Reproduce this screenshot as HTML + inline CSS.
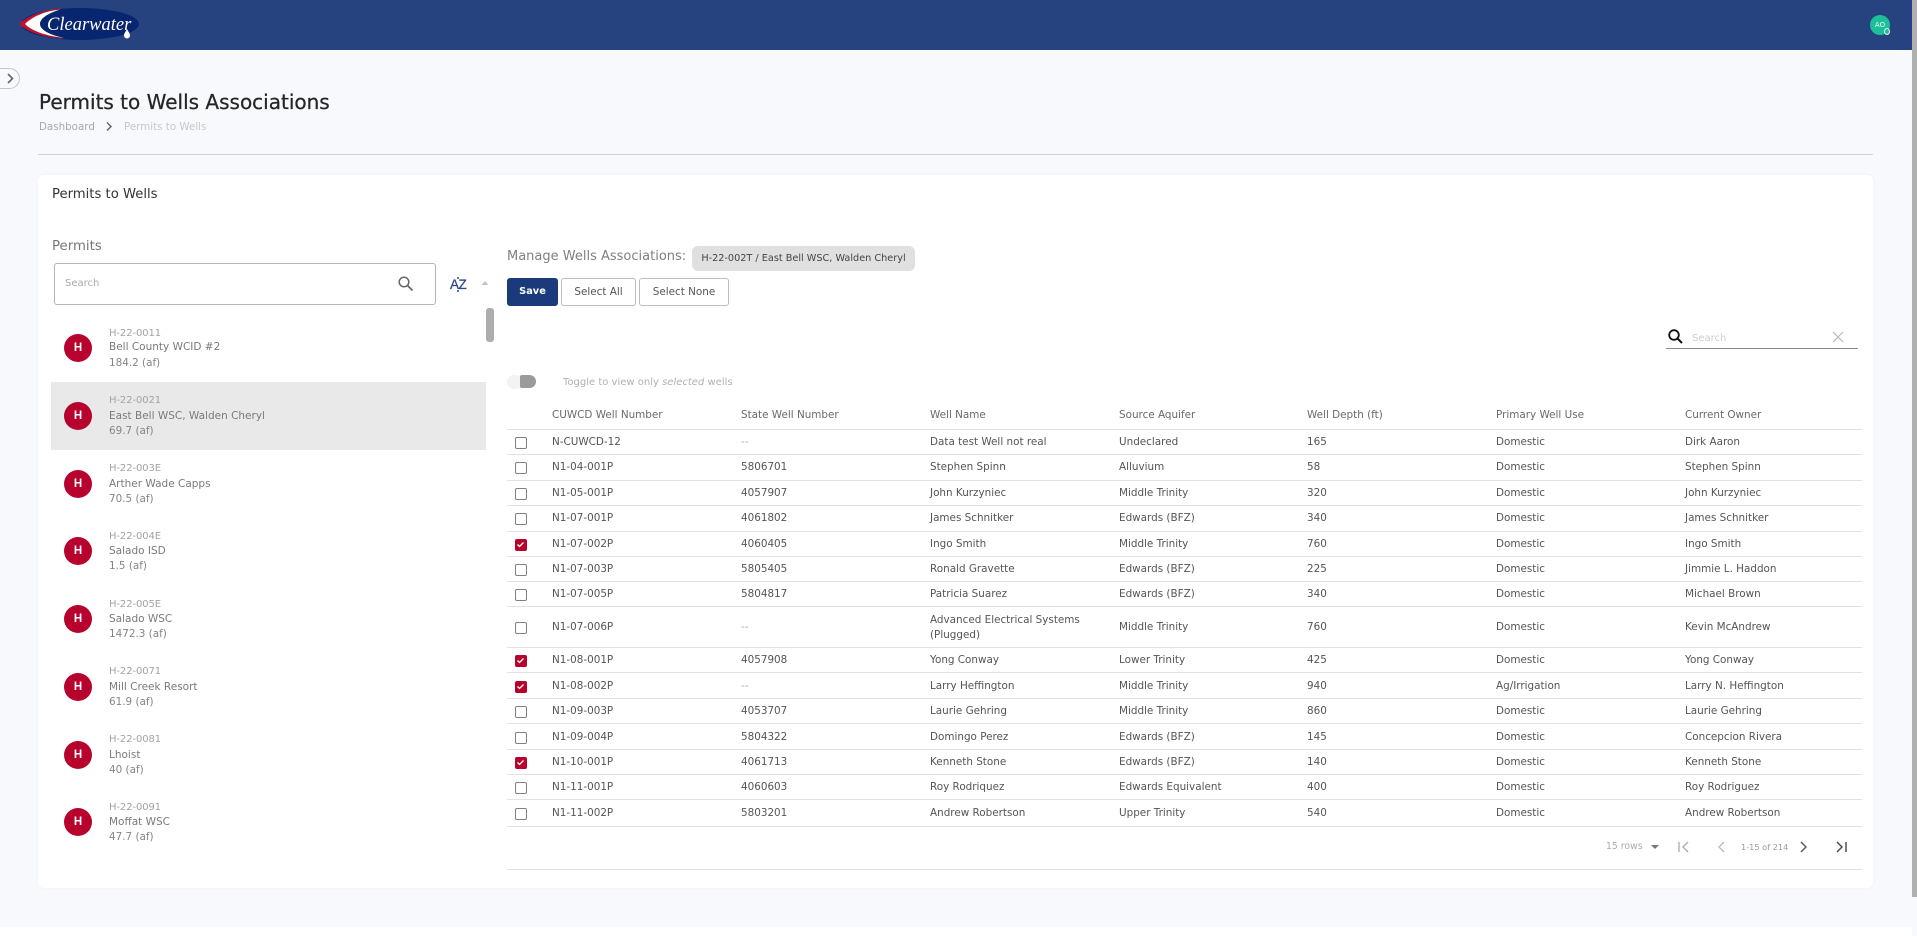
<!DOCTYPE html>
<html><head><meta charset="utf-8"><title>Permits to Wells Associations</title>
<style>
*{box-sizing:border-box}
html,body{margin:0;padding:0}
body{width:1917px;height:936px;overflow:hidden;position:relative;background:#f7f9fc;font-family:"DejaVu Sans","Liberation Sans",sans-serif;color:#4a4a4a;font-size:10.4px}
.a{position:absolute;white-space:nowrap}
.hdr{left:0;top:0;width:1912px;height:50px;background:#27437f}
.sb{left:1912px;top:0;width:5px;height:897px;background:#b0b0b0}
.card{left:38px;top:175px;width:1835px;height:713px;background:#fff;border-radius:6px;box-shadow:0 0 3px rgba(40,60,110,.05)}
.foot{left:0;top:927px;width:1912px;height:9px;background:#fff}
.av{position:absolute;left:64px;width:28px;height:28px;border-radius:50%;background:#b8022e;color:#fff;text-align:center;line-height:28px;font:bold 11.5px/28px "Liberation Sans",sans-serif}
.c{left:109px;color:#a3a3a3;font-size:10px;line-height:14px;height:14px;letter-spacing:-.1px;margin-top:1px}
.n{left:109px;color:#7a7a7a;font-size:10.5px;line-height:14px;height:14px;margin-top:1px}
.f{left:109px;color:#858585;font-size:10.4px;line-height:14px;height:14px;margin-top:1px}
.btn{top:278px;height:28px;border:1px solid #bdbdbd;border-radius:3px;background:#fff;text-align:center;line-height:26px;font-size:10.4px;color:#555}
.row{position:absolute;left:507px;width:1355px;display:grid;grid-template-columns:45px 189px 189px 189px 188px 189px 189px 177px;align-items:center;border-bottom:1px solid #e2e2e2;color:#555;font-size:10.4px;line-height:15px}
.row div{padding-right:8px;white-space:nowrap}
.row .w{white-space:normal}
.cb{display:block;width:12px;height:12px;margin-left:8px;margin-top:1px;border:1.5px solid #808080;border-radius:2px;background:#fff}
.cb.on{background:#b8022e;border-color:#b8022e;position:relative}
.cb.on svg{position:absolute;left:0;top:0}
.hd{color:#6a6a6a}
.m{color:#aaa}
.nudge{padding-top:1px}
</style></head><body>
<div class="a hdr"></div>
<svg class="a" style="left:16px;top:5px" width="126" height="38" viewBox="0 0 126 38">
<ellipse cx="64" cy="19" rx="59" ry="16" fill="#08266f"/>
<path d="M3 19C12 10 30 4 48 3 28 7 18 13 18 19c0 6 12 12 32 15C30 33 12 28 3 19Z" fill="#b8142f"/>
<path d="M9 19C17 11 30 6 44 4.500 30 9 24 14 24 19c0 6 10 11 24 14C32 31 17 27 9 19Z" fill="#fff"/>
<text x="31" y="25" fill="#fff" font-family="Liberation Serif,serif" font-style="italic" font-size="18.500">Clearwater</text>
<path d="M111 24c-1.500 3-3 4.500-3 6.500a3 3 0 0 0 6 0c0-2-1.500-3.500-3-6.500Z" fill="#fff"/>
</svg>
<div class="a" style="left:1870px;top:15px;width:20px;height:20px;border-radius:50%;background:#1dbf9b;color:#e8fff8;font-size:7px;line-height:20px;text-align:center">AO</div>
<div class="a" style="left:1884px;top:28px;width:6px;height:7px;border-radius:50%;background:#1dbf9b;border:1.5px solid #e6f5ee"></div>
<div class="a sb"></div>
<div class="a foot"></div>

<div class="a" style="left:-10px;top:68px;width:30px;height:21px;border:1px solid #c4c4c4;border-radius:11px;background:#f7f9fc"></div>
<svg class="a" style="left:5px;top:72px" width="10" height="13" viewBox="0 0 10 13"><path d="M3 2l4.500 4.500L3 11" fill="none" stroke="#666" stroke-width="1.600"/></svg>

<div class="a" style="left:39px;top:90px;font-size:20px;line-height:24px;color:#262626;font-weight:400;-webkit-text-stroke:.25px #262626">Permits to Wells Associations</div>
<div class="a" style="left:39px;top:120px;font-size:10.300px;line-height:14px;color:#a8a8a8">Dashboard</div>
<svg class="a" style="left:105px;top:121px" width="9" height="11" viewBox="0 0 9 11"><path d="M2 1.500l4 4-4 4" fill="none" stroke="#666" stroke-width="1.500"/></svg>
<div class="a" style="left:124px;top:120px;font-size:10.300px;line-height:14px;color:#c8c8c8">Permits to Wells</div>
<div class="a" style="left:38px;top:154px;width:1835px;height:1px;background:#d0d3d8"></div>

<div class="a card"></div>
<div class="a" style="left:52px;top:187px;font-size:13.200px;line-height:15px;color:#333">Permits to Wells</div>

<div class="a" style="left:52px;top:239px;font-size:13.300px;line-height:15px;color:#777">Permits</div>
<div class="a" style="left:54px;top:263px;width:382px;height:42px;border:1px solid #b5b5b5;border-radius:3px;background:#fff"></div>
<div class="a" style="left:65px;top:276px;font-size:10px;line-height:15px;color:#aaa">Search</div>
<svg class="a" style="left:397px;top:275px" width="17" height="17" viewBox="0 0 17 17"><circle cx="7" cy="7" r="4.800" fill="none" stroke="#666" stroke-width="1.500"/><path d="M10.500 10.500l5 5" stroke="#666" stroke-width="1.700"/></svg>
<div class="a" style="left:450px;top:277px;font:13.500px/15px 'Liberation Sans',sans-serif;color:#2b4a8c;letter-spacing:-.5px;-webkit-text-stroke:.3px #2b4a8c">AZ</div>
<div class="a" style="left:457px;top:277px;width:2px;height:2px;border-radius:50%;background:#2b4a8c"></div>
<div class="a" style="left:457px;top:290px;width:2px;height:2px;border-radius:50%;background:#2b4a8c"></div>
<svg class="a" style="left:480px;top:280px" width="10" height="6" viewBox="0 0 10 6"><path d="M1.500 5L5 1l3.500 4Z" fill="#c4c4c4"/></svg>
<div class="a" style="left:486px;top:308px;width:8px;height:34px;border-radius:3px;background:#adadad"></div>

<div class="a" style="left:51px;top:382px;width:435px;height:68px;background:#e9e9e9"></div>

<div class="av" style="top:334px">H</div><div class="a c" style="top:326px">H-22-0011</div><div class="a n" style="top:339px">Bell County WCID #2</div><div class="a f" style="top:355px">184.2 (af)</div>
<div class="av" style="top:402px">H</div><div class="a c" style="top:393px">H-22-0021</div><div class="a n" style="top:408px">East Bell WSC, Walden Cheryl</div><div class="a f" style="top:423px">69.7 (af)</div>
<div class="av" style="top:470px">H</div><div class="a c" style="top:461px">H-22-003E</div><div class="a n" style="top:476px">Arther Wade Capps</div><div class="a f" style="top:491px">70.5 (af)</div>
<div class="av" style="top:537px">H</div><div class="a c" style="top:529px">H-22-004E</div><div class="a n" style="top:543px">Salado ISD</div><div class="a f" style="top:558px">1.5 (af)</div>
<div class="av" style="top:605px">H</div><div class="a c" style="top:597px">H-22-005E</div><div class="a n" style="top:611px">Salado WSC</div><div class="a f" style="top:626px">1472.3 (af)</div>
<div class="av" style="top:673px">H</div><div class="a c" style="top:664px">H-22-0071</div><div class="a n" style="top:679px">Mill Creek Resort</div><div class="a f" style="top:694px">61.9 (af)</div>
<div class="av" style="top:741px">H</div><div class="a c" style="top:732px">H-22-0081</div><div class="a n" style="top:747px">Lhoist</div><div class="a f" style="top:762px">40 (af)</div>
<div class="av" style="top:808px">H</div><div class="a c" style="top:800px">H-22-0091</div><div class="a n" style="top:814px">Moffat WSC</div><div class="a f" style="top:829px">47.7 (af)</div>

<div class="a" style="left:507px;top:249px;font-size:13px;line-height:15px;color:#808080">Manage Wells Associations:</div>
<div class="a" style="left:692px;top:246px;width:223px;height:25px;background:#e0e0e0;border-radius:6px;text-align:center;line-height:25px;font-size:9.700px;color:#444">H-22-002T / East Bell WSC, Walden Cheryl</div>
<div class="a btn" style="left:507px;width:51px;background:#1a3a7c;border-color:#1a3a7c;color:#fff;font-weight:bold;font-size:9.800px">Save</div>
<div class="a btn" style="left:561px;width:75px">Select All</div>
<div class="a btn" style="left:639px;width:90px">Select None</div>

<svg class="a" style="left:1667px;top:328px" width="17" height="17" viewBox="0 0 17 17"><circle cx="7" cy="7" r="4.800" fill="none" stroke="#111" stroke-width="1.800"/><path d="M10.500 10.500l4.500 4.500" stroke="#111" stroke-width="2"/></svg>
<div class="a" style="left:1692px;top:331px;font-size:10px;line-height:15px;color:#ccc">Search</div>
<svg class="a" style="left:1831px;top:330px" width="14" height="14" viewBox="0 0 14 14"><path d="M2 2l10 10M12 2L2 12" stroke="#b8b8b8" stroke-width="1.200"/></svg>
<div class="a" style="left:1666px;top:348px;width:192px;height:1px;background:#8a8a8a"></div>

<div class="a" style="left:507px;top:375px;width:16px;height:14px;border-radius:7px;background:#f3f3f3"></div>
<div class="a" style="left:520px;top:375px;width:16px;height:13px;border-radius:2px 7px 7px 2px;background:#9b9b9b"></div>
<div class="a" style="left:563px;top:375px;font-size:10px;line-height:15px;color:#b0b0b0">Toggle to view only <i>selected</i> wells</div>

<div class="row hd" style="top:402px;height:28px;padding-bottom:1px"><div></div><div>CUWCD Well Number</div><div>State Well Number</div><div>Well Name</div><div>Source Aquifer</div><div>Well Depth (ft)</div><div>Primary Well Use</div><div>Current Owner</div></div>

<div class="row" style="top:430px;height:25px"><div><span class="cb"></span></div><div>N-CUWCD-12</div><div class="m">--</div><div>Data test Well not real</div><div>Undeclared</div><div>165</div><div>Domestic</div><div>Dirk Aaron</div></div>
<div class="row" style="top:455px;height:26px"><div><span class="cb"></span></div><div>N1-04-001P</div><div>5806701</div><div>Stephen Spinn</div><div>Alluvium</div><div>58</div><div>Domestic</div><div>Stephen Spinn</div></div>
<div class="row" style="top:481px;height:25px"><div><span class="cb"></span></div><div>N1-05-001P</div><div>4057907</div><div>John Kurzyniec</div><div>Middle Trinity</div><div>320</div><div>Domestic</div><div>John Kurzyniec</div></div>
<div class="row" style="top:506px;height:26px"><div><span class="cb"></span></div><div>N1-07-001P</div><div>4061802</div><div>James Schnitker</div><div>Edwards (BFZ)</div><div>340</div><div>Domestic</div><div>James Schnitker</div></div>
<div class="row" style="top:532px;height:25px"><div><span class="cb on"><svg width="9" height="9" viewBox="0 0 9 9"><path d="M1.500 4.500l2 2 4-4" fill="none" stroke="#fff" stroke-width="1.300"/></svg></span></div><div>N1-07-002P</div><div>4060405</div><div>Ingo Smith</div><div>Middle Trinity</div><div>760</div><div>Domestic</div><div>Ingo Smith</div></div>
<div class="row" style="top:557px;height:25px"><div><span class="cb"></span></div><div>N1-07-003P</div><div>5805405</div><div>Ronald Gravette</div><div>Edwards (BFZ)</div><div>225</div><div>Domestic</div><div>Jimmie L. Haddon</div></div>
<div class="row nudge" style="top:582px;height:25px"><div><span class="cb"></span></div><div>N1-07-005P</div><div>5804817</div><div>Patricia Suarez</div><div>Edwards (BFZ)</div><div>340</div><div>Domestic</div><div>Michael Brown</div></div>
<div class="row nudge" style="top:607px;height:41px"><div><span class="cb"></span></div><div>N1-07-006P</div><div class="m">--</div><div class="w">Advanced Electrical Systems<br>(Plugged)</div><div>Middle Trinity</div><div>760</div><div>Domestic</div><div>Kevin McAndrew</div></div>
<div class="row" style="top:648px;height:25px"><div><span class="cb on"><svg width="9" height="9" viewBox="0 0 9 9"><path d="M1.500 4.500l2 2 4-4" fill="none" stroke="#fff" stroke-width="1.300"/></svg></span></div><div>N1-08-001P</div><div>4057908</div><div>Yong Conway</div><div>Lower Trinity</div><div>425</div><div>Domestic</div><div>Yong Conway</div></div>
<div class="row nudge" style="top:673px;height:26px"><div><span class="cb on"><svg width="9" height="9" viewBox="0 0 9 9"><path d="M1.500 4.500l2 2 4-4" fill="none" stroke="#fff" stroke-width="1.300"/></svg></span></div><div>N1-08-002P</div><div class="m">--</div><div>Larry Heffington</div><div>Middle Trinity</div><div>940</div><div>Ag/Irrigation</div><div>Larry N. Heffington</div></div>
<div class="row" style="top:699px;height:25px"><div><span class="cb"></span></div><div>N1-09-003P</div><div>4053707</div><div>Laurie Gehring</div><div>Middle Trinity</div><div>860</div><div>Domestic</div><div>Laurie Gehring</div></div>
<div class="row nudge" style="top:724px;height:26px"><div><span class="cb"></span></div><div>N1-09-004P</div><div>5804322</div><div>Domingo Perez</div><div>Edwards (BFZ)</div><div>145</div><div>Domestic</div><div>Concepcion Rivera</div></div>
<div class="row" style="top:750px;height:25px"><div><span class="cb on"><svg width="9" height="9" viewBox="0 0 9 9"><path d="M1.500 4.500l2 2 4-4" fill="none" stroke="#fff" stroke-width="1.300"/></svg></span></div><div>N1-10-001P</div><div>4061713</div><div>Kenneth Stone</div><div>Edwards (BFZ)</div><div>140</div><div>Domestic</div><div>Kenneth Stone</div></div>
<div class="row nudge" style="top:775px;height:25px"><div><span class="cb"></span></div><div>N1-11-001P</div><div>4060603</div><div>Roy Rodriquez</div><div>Edwards Equivalent</div><div>400</div><div>Domestic</div><div>Roy Rodriguez</div></div>
<div class="row" style="top:800px;height:27px"><div><span class="cb"></span></div><div>N1-11-002P</div><div>5803201</div><div>Andrew Robertson</div><div>Upper Trinity</div><div>540</div><div>Domestic</div><div>Andrew Robertson</div></div>

<div class="a" style="left:1606px;top:840px;font-size:9.300px;line-height:14px;color:#aaa">15 rows</div>
<svg class="a" style="left:1650px;top:844px" width="10" height="6" viewBox="0 0 10 6"><path d="M1 1h8L5 5Z" fill="#777"/></svg>
<svg class="a" style="left:1677px;top:840px" width="13" height="14" viewBox="0 0 13 14"><path d="M2 2v10M11 2L6 7l5 5" fill="none" stroke="#aaa" stroke-width="1.300"/></svg>
<svg class="a" style="left:1716px;top:840px" width="11" height="14" viewBox="0 0 11 14"><path d="M8 2L3 7l5 5" fill="none" stroke="#bbb" stroke-width="1.300"/></svg>
<div class="a" style="left:1741px;top:840px;font-size:8.200px;line-height:14px;color:#999">1-15 of 214</div>
<svg class="a" style="left:1798px;top:840px" width="11" height="14" viewBox="0 0 11 14"><path d="M3 2l5 5-5 5" fill="none" stroke="#555" stroke-width="1.400"/></svg>
<svg class="a" style="left:1835px;top:840px" width="13" height="14" viewBox="0 0 13 14"><path d="M2 2l5 5-5 5M11 2v10" fill="none" stroke="#444" stroke-width="1.400"/></svg>
<div class="a" style="left:507px;top:869px;width:1355px;height:1px;background:#e2e2e2"></div>
</body></html>
